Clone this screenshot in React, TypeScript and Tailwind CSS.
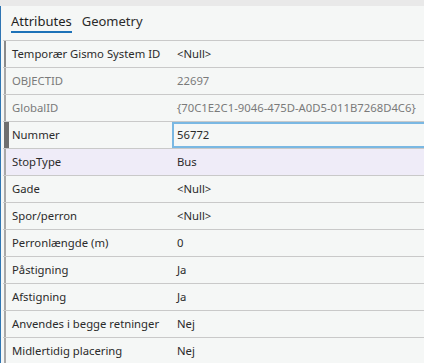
import React from "react";

type Row = { label: string; value: string; dim?: boolean; active?: boolean; hl?: boolean };

const rows: Row[] = [
  { label: "Temporær Gismo System ID", value: "<Null>" },
  { label: "OBJECTID", value: "22697", dim: true },
  { label: "GlobalID", value: "{70C1E2C1-9046-475D-A0D5-011B7268D4C6}", dim: true },
  { label: "Nummer", value: "56772", active: true },
  { label: "StopType", value: "Bus", hl: true },
  { label: "Gade", value: "<Null>" },
  { label: "Spor/perron", value: "<Null>" },
  { label: "Perronlængde (m)", value: "0" },
  { label: "Påstigning", value: "Ja" },
  { label: "Afstigning", value: "Ja" },
  { label: "Anvendes i begge retninger", value: "Nej" },
  { label: "Midlertidig placering", value: "Nej" },
];

export default function App() {
  return (
    <div
      className="w-[424px] h-[363px] overflow-hidden bg-[#f5f7f6] text-[#2b2b2b]"
      style={{ fontFamily: '"Noto Sans", "Open Sans", sans-serif' }}
    >
      <div className="h-[6px] bg-[#e9e9e9]" />
      <div className="flex">
        <div className="w-[1px] bg-[#2f75b3] shrink-0" />
        <div className="flex-1 min-w-0">
          <div className="h-[34px] pt-[7px] pl-[10px] flex gap-[10px] text-[13px]">
            <div className="leading-[16px] pb-[2px] border-b-2 border-[#1d72b8] text-[#1f1f1f] h-[20px]">
              Attributes
            </div>
            <div className="leading-[16px] pb-[2px] border-b-2 border-transparent text-[#2b2b2b] h-[20px]">
              Geometry
            </div>
          </div>
          <div className="ml-[2px] border-t border-[#c9c9c9] text-[11.3px]">
            {rows.map((r) => (
              <div
                key={r.label}
                className={`flex h-[27px] border-b border-[#c9c9c9] ${r.hl ? "bg-[#efecf8]" : ""}`}
              >
                <div className="w-[6px] shrink-0 flex">
                  <div
                    className={`ml-[1px] h-full ${
                      r.active
                        ? "w-[5px] bg-[#6f6f6f]"
                        : r.label.startsWith("Temp")
                        ? "w-[2px] bg-[#8a8a8a]"
                        : "w-[2px] bg-[#a8a8a8]"
                    }`}
                  />
                </div>
                <div
                  className={`w-[163px] shrink-0 pl-[3px] flex items-center whitespace-nowrap ${
                    r.dim ? "text-[#7a7a7a]" : "text-[#2b2b2b]"
                  }`}
                >
                  {r.label}
                </div>
                <div className="flex-1 min-w-0 flex">
                  {r.active ? (
                    <div className="flex-1 -mr-[6px] border-2 border-[#7ab8e3] pl-[3px] flex items-center whitespace-nowrap text-[#2b2b2b]">
                      {r.value}
                    </div>
                  ) : (
                    <div
                      className={`flex-1 pl-[5px] flex items-center whitespace-nowrap ${
                        r.dim ? "text-[#7a7a7a]" : "text-[#2b2b2b]"
                      }`}
                    >
                      {r.value}
                    </div>
                  )}
                </div>
              </div>
            ))}
          </div>
        </div>
      </div>
    </div>
  );
}
